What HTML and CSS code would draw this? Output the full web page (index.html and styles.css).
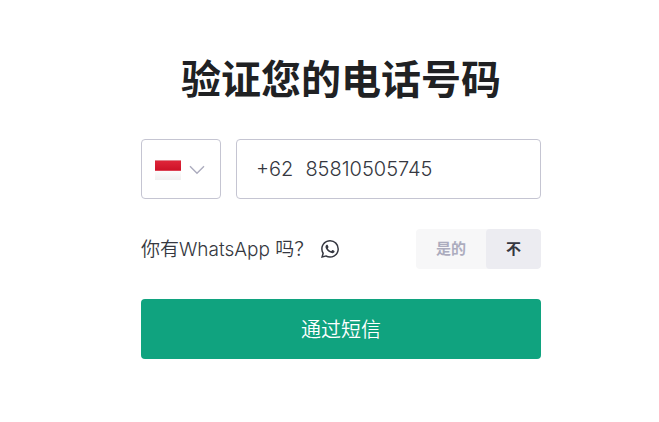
FILE: index.html
```html
<!DOCTYPE html>
<html lang="zh-CN">
<head>
<meta charset="utf-8">
<meta name="viewport" content="width=device-width, initial-scale=1">
<title>验证您的电话号码</title>
<link rel="stylesheet" href="styles.css">
</head>
<body>
<main class="page">
  <form class="verify">
    <h1 class="title">验证您的电话号码</h1>
    <div class="phone-row">
      <div class="country">
        <select class="country-select" aria-label="国家">
          <option value="ID" selected></option>
        </select>
        <svg class="flag" viewBox="0 0 26 20" aria-hidden="true">
          <defs>
            <linearGradient id="red" x1="0" y1="0" x2="0" y2="1"><stop offset="0" stop-color="#e0273b"/><stop offset="1" stop-color="#cc1126"/></linearGradient>
            <linearGradient id="white" x1="0" y1="0" x2="0" y2="1"><stop offset="0" stop-color="#fcfcfc"/><stop offset="1" stop-color="#f0f0f0"/></linearGradient>
          </defs>
          <rect width="26" height="11" fill="url(#red)"/>
          <rect width="26" height="1" fill="#e3858f"/>
          <rect y="10" width="26" height="1" fill="#dc4354"/>
          <rect y="11" width="26" height="9" fill="url(#white)"/>
        </svg>
        <svg class="chevron" viewBox="0 0 16 10" aria-hidden="true"><path d="M1 1.2 8 8.2 15 1.2"/></svg>
      </div>
      <label class="phone">
        <span class="prefix">+62</span>
        <input class="phone-input" type="tel" value="85810505745" aria-label="电话号码">
      </label>
    </div>
    <div class="whatsapp-row">
      <span class="question" id="whatsapp-question">你有WhatsApp 吗？</span>
      <svg class="whatsapp" viewBox="0 0 24 24" aria-hidden="true"><path d="M17.472 14.382c-.297-.149-1.758-.867-2.03-.967-.273-.099-.471-.148-.67.15-.197.297-.767.966-.94 1.164-.173.199-.347.223-.644.075-.297-.15-1.255-.463-2.39-1.475-.883-.788-1.48-1.761-1.653-2.059-.173-.297-.018-.458.13-.606.134-.133.298-.347.446-.52.149-.174.198-.298.298-.497.099-.198.05-.371-.025-.52-.075-.149-.669-1.612-.916-2.207-.242-.579-.487-.5-.669-.51-.173-.008-.371-.01-.57-.01-.198 0-.52.074-.792.372-.272.297-1.04 1.016-1.04 2.479 0 1.462 1.065 2.875 1.213 3.074.149.198 2.096 3.2 5.077 4.487.709.306 1.262.489 1.694.625.712.227 1.36.195 1.871.118.571-.085 1.758-.719 2.006-1.413.248-.694.248-1.289.173-1.413-.074-.124-.272-.198-.57-.347m-5.421 7.403h-.004a9.87 9.87 0 01-5.031-1.378l-.361-.214-3.741.982.998-3.648-.235-.374a9.86 9.86 0 01-1.51-5.26c.001-5.45 4.436-9.884 9.888-9.884 2.64 0 5.122 1.03 6.988 2.898a9.825 9.825 0 012.893 6.994c-.003 5.45-4.437 9.884-9.885 9.884m8.413-18.297A11.815 11.815 0 0012.05 0C5.495 0 .16 5.335.157 11.892c0 2.096.547 4.142 1.588 5.945L.057 24l6.305-1.654a11.882 11.882 0 005.683 1.448h.005c6.554 0 11.89-5.335 11.893-11.893a11.821 11.821 0 00-3.48-8.413z"/></svg>
      <div class="toggle" role="group" aria-labelledby="whatsapp-question">
        <button class="choice" type="button" aria-pressed="false">是的</button>
        <button class="choice selected" type="button" aria-pressed="true">不</button>
      </div>
    </div>
    <button class="submit" type="button">通过短信</button>
  </form>
</main>
</body>
</html>
```
FILE: styles.css
```css
* {
  box-sizing: border-box;
}

body {
  margin: 0;
  background: #fff;
  color: #353740;
  font-family: Inter, "Noto Sans CJK SC", sans-serif;
  font-size: 20px;
}

button,
input,
select {
  margin: 0;
  font: inherit;
}

.page {
  padding: 50px 0 60px 23px;
}

.verify {
  width: 100%;
  max-width: 400px;
  margin: 0 auto;
}

.title {
  margin: 0 0 29px;
  color: #202123;
  font-size: 40px;
  font-weight: 700;
  line-height: 60px;
  text-align: center;
  white-space: nowrap;
}

.phone-row {
  display: flex;
  gap: 15px;
  margin-bottom: 30px;
}

.country {
  position: relative;
  display: flex;
  flex: 0 0 80px;
  align-items: center;
  gap: 8px;
  height: 60px;
  padding: 2px 14px 0;
}

.country-select {
  position: absolute;
  inset: 0;
  width: 100%;
  height: 100%;
  appearance: none;
  border: 1px solid #c5c5d2;
  border-radius: 4px;
  background: #fff;
}

.flag,
.chevron {
  position: relative;
  flex: none;
  pointer-events: none;
}

.flag {
  width: 26px;
  height: 20px;
}

.chevron {
  width: 16px;
  height: 10px;
  fill: none;
  stroke: #acacbe;
  stroke-width: 1.4;
}

.phone {
  display: flex;
  flex: 1;
  align-items: center;
  gap: 12px;
  min-width: 0;
  height: 60px;
  padding: 0 19px;
  border: 1px solid #c5c5d2;
  border-radius: 4px;
  font-size: 20px;
  font-weight: 350;
}

.phone-input {
  flex: 1;
  min-width: 0;
  padding: 0;
  border: 0;
  outline: 0;
  background: none;
  color: inherit;
}

.whatsapp-row {
  display: flex;
  align-items: center;
  gap: 8px;
  height: 40px;
  margin-bottom: 30px;
}

.question {
  padding-bottom: 4px;
  font-size: 19px;
  font-weight: 350;
  white-space: nowrap;
}

.whatsapp {
  flex: none;
  width: 18px;
  height: 18px;
  fill: #353740;
}

.toggle {
  display: flex;
  height: 40px;
  margin-left: auto;
  overflow: hidden;
  border-radius: 4px;
  background: #f7f7f8;
}

.choice {
  padding: 0 20px 4px;
  border: 0;
  background: none;
  color: #acacbe;
  font-size: 15px;
  font-weight: 700;
}

.choice.selected {
  border-radius: 4px;
  background: #ececf1;
  color: #353740;
}

.submit {
  display: block;
  width: 100%;
  height: 60px;
  padding: 0 0 2px;
  border: 0;
  border-radius: 4px;
  background: #10a37f;
  color: #fff;
  font-weight: 350;
}
```
